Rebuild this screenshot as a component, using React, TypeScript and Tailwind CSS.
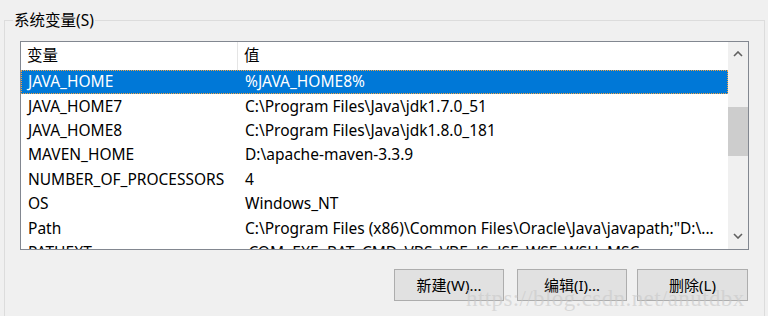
const rows: [string, string][] = [
  ["JAVA_HOME", "%JAVA_HOME8%"],
  ["JAVA_HOME7", "C:\\Program Files\\Java\\jdk1.7.0_51"],
  ["JAVA_HOME8", "C:\\Program Files\\Java\\jdk1.8.0_181"],
  ["MAVEN_HOME", "D:\\apache-maven-3.3.9"],
  ["NUMBER_OF_PROCESSORS", "4"],
  ["OS", "Windows_NT"],
  ["Path", "C:\\Program Files (x86)\\Common Files\\Oracle\\Java\\javapath;\"D:\\..."],
  ["PATHEXT", ".COM;.EXE;.BAT;.CMD;.VBS;.VBE;.JS;.JSE;.WSF;.WSH;.MSC"],
];

const font = { fontFamily: '"Noto Sans", "Noto Sans CJK SC", sans-serif' };

export default function App() {
  return (
    <div className="relative w-[768px] h-[316px] overflow-hidden bg-[#f0f0f0] text-[15.5px] text-black" style={font}>
      <div className="pt-[20px] pl-[4px] pr-[3px]">
        {/* System variables group */}
        <div className="relative h-[320px] border-t border-l border-r border-[#dcdcdc]">
          <span className="absolute -top-[12px] left-[8px] bg-[#f0f0f0] px-[1px] leading-[22px] text-[15.5px]">
            系统变量(S)
          </span>

          <div className="ml-[15px] mt-[20px] flex h-[209px] w-[729px] border border-[#828790] bg-white">
            <div className="flex-1 overflow-hidden">
              {/* Header */}
              <div className="flex h-[28px] items-center">
                <div className="flex h-full w-[217px] items-center border-r border-[#e5e5e5] pl-[6px]">变量</div>
                <div className="pl-[6px]">值</div>
              </div>
              {rows.map(([name, value], i) => (
                <div
                  key={name}
                  className={
                    i === 0
                      ? "flex h-[24px] items-center border border-dotted border-[#f4a340] bg-[#0078d7] text-white"
                      : "flex h-[24.4px] items-center border border-transparent"
                  }
                >
                  <div className="w-[217px] whitespace-nowrap pl-[6px]">{name}</div>
                  <div className="whitespace-nowrap pl-[6px]">{value}</div>
                </div>
              ))}
            </div>

            {/* Scrollbar */}
            <div className="flex w-[20px] flex-col bg-[#f0f0f0]">
              <div className="flex h-[20px] items-center justify-center pt-[4px]">
                <svg width="10" height="6" viewBox="0 0 10 6">
                  <path d="M1 5 L5 1 L9 5" fill="none" stroke="#606060" strokeWidth="1.6" />
                </svg>
              </div>
              <div className="mt-[45px] h-[49px] bg-[#cdcdcd]" />
              <div className="flex-1" />
              <div className="flex h-[20px] items-center justify-center pb-[6px]">
                <svg width="10" height="6" viewBox="0 0 10 6">
                  <path d="M1 1 L5 5 L9 1" fill="none" stroke="#606060" strokeWidth="1.6" />
                </svg>
              </div>
            </div>
          </div>

          {/* Buttons */}
          <div className="mt-[19px] flex pl-[389px] text-[15px]">
            <button className="h-[32px] w-[110px] border border-[#adadad] bg-[#e1e1e1]">新建(W)...</button>
            <button className="ml-[13px] h-[32px] w-[110px] border border-[#adadad] bg-[#e1e1e1]">编辑(I)...</button>
            <button className="ml-[10px] h-[32px] w-[111px] border border-[#adadad] bg-[#e1e1e1]">删除(L)</button>
          </div>
        </div>
      </div>

      {/* Watermark */}
      <div
        className="pointer-events-none absolute left-[466px] top-[282px] text-[23px] tracking-[0.4px] text-[#c8c8c8]/60"
        style={{ fontFamily: '"Liberation Serif", serif' }}
      >
        https://blog.csdn.net/anutdbx
      </div>
    </div>
  );
}
